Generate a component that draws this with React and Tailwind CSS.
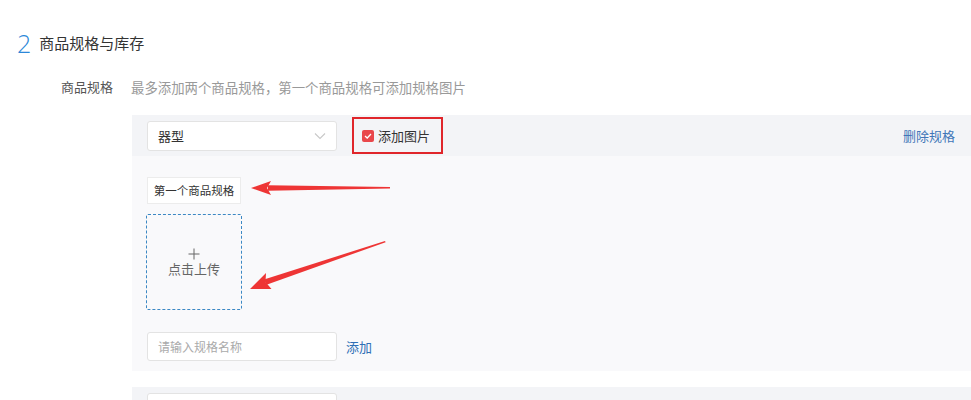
import React from "react";

function Chevron() {
  return (
    <svg width="12" height="8" viewBox="0 0 12 8" fill="none">
      <path d="M1 1.5 L6 6.5 L11 1.5" stroke="#c8c8c8" strokeWidth="1.1" />
    </svg>
  );
}

function Arrows() {
  return (
    <svg
      className="absolute left-0 top-0 pointer-events-none"
      width="971"
      height="400"
      viewBox="0 0 971 400"
    >
      {/* arrow 1 */}
      <polygon points="390,187 268,185.2 268,190.8 390,188.6" fill="#ee3535" />
      <polygon points="251,188 271,181 267,188 271,195" fill="#ee3535" />
      {/* arrow 2 */}
      <polygon points="385,241 264,279.5 266.5,284.7 385.6,242.2" fill="#ee3535" />
      <polygon points="250,289 266,273 265.5,282 271.5,289" fill="#ee3535" />
    </svg>
  );
}

function PanelHeader({ value, withCheckbox, withDelete }) {
  return (
    <div className="h-[41px] bg-[#f3f4f7] flex items-center pl-[15px] pr-[16px]">
      <div className="w-[190px] h-[30px] bg-white border border-[#e3e3e3] rounded-[3px] flex items-center justify-between pl-[10px] pr-[10px] text-[13px] text-[#333]">
        <span>{value}</span>
        <Chevron />
      </div>
      {withCheckbox && (
        <div className="ml-[15px] w-[91px] h-[37px] border-2 border-[#e0262b] flex items-center pl-[8px]">
          <span className="w-[12px] h-[12px] rounded-[2px] bg-[#e9474b] flex items-center justify-center">
            <svg width="8" height="6" viewBox="0 0 8 6" fill="none">
              <path d="M1 3 L3.2 5 L7 1" stroke="white" strokeWidth="1.3" />
            </svg>
          </span>
          <span className="ml-[4px] text-[13px] text-[#333]">添加图片</span>
        </div>
      )}
      <div className="flex-1" />
      {withDelete && (
        <span className="text-[13px] text-[#4176b8]">删除规格</span>
      )}
    </div>
  );
}

export default function App() {
  return (
    <div
      className="relative w-[971px] h-[400px] overflow-hidden bg-white"
      style={{ fontFamily: '"Noto Sans CJK SC", "Noto Sans", sans-serif' }}
    >
      <div className="pt-[25px] pl-[17px] flex items-center h-[62px]">
        <span
          className="text-[25px] leading-none text-[#2b87d8] font-light"
          style={{ fontFamily: '"Open Sans", "Noto Sans", sans-serif' }}
        >
          2
        </span>
        <span className="ml-[8px] text-[15px] text-[#333]">商品规格与库存</span>
      </div>
      <div className="flex items-center h-[44px] mt-[3px]">
        <span className="ml-[61px] text-[13px] text-[#555]">商品规格</span>
        <span className="ml-[18px] text-[13.4px] text-[#999]">
          最多添加两个商品规格，第一个商品规格可添加规格图片
        </span>
      </div>
      <div className="ml-[132px] mt-[6px]">
        <div>
          <PanelHeader value="器型" withCheckbox withDelete />
          <div className="bg-[#f9f9fb] pl-[15px] pt-[21px] pb-[10px]">
            <div className="w-[94px] h-[27px] bg-white border border-[#ececec] flex items-center justify-center text-[11.5px] text-[#333]">
              第一个商品规格
            </div>
            <div className="mt-[10px] w-[96px] h-[96px] -ml-px border border-dashed border-[#3b88c4] rounded-[2px] flex flex-col items-center justify-center text-[#666]">
              <svg width="12" height="12" viewBox="0 0 12 12" fill="none">
                <path d="M6 0.5 V11.5 M0.5 6 H11.5" stroke="#666" strokeWidth="1" />
              </svg>
              <span className="mt-[1px] text-[13px] leading-[16px]">点击上传</span>
            </div>
            <div className="mt-[22px] flex items-center">
              <div className="w-[190px] h-[29px] bg-white border border-[#e3e3e3] rounded-[3px] flex items-center pl-[10px] text-[12px] text-[#aaa]">
                请输入规格名称
              </div>
              <span className="ml-[9px] text-[13px] text-[#2f6fb5]">添加</span>
            </div>
          </div>
        </div>
        <div className="mt-[16px]">
          <PanelHeader value="" />
        </div>
      </div>
      <Arrows />
    </div>
  );
}
